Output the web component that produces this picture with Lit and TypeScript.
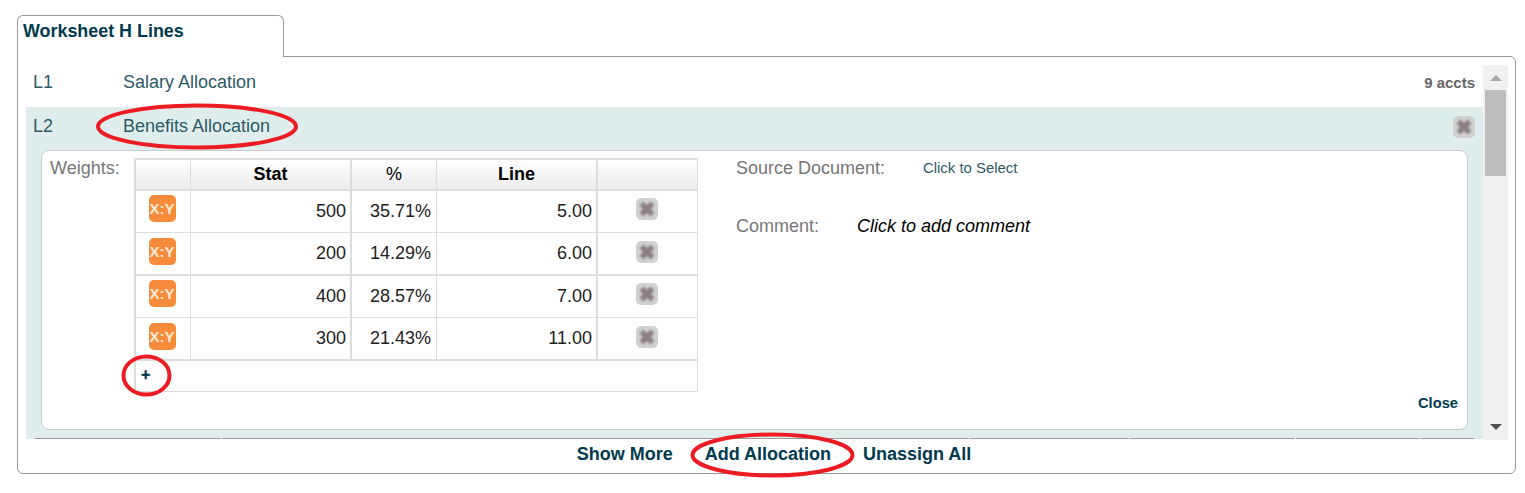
import { LitElement, html, css, svg } from "lit";
import { customElement } from "lit/decorators.js";

const rows = [
  { stat: "500", pct: "35.71%", line: "5.00", h: 42, thick: false },
  { stat: "200", pct: "14.29%", line: "6.00", h: 43, thick: true },
  { stat: "400", pct: "28.57%", line: "7.00", h: 42, thick: false },
  { stat: "300", pct: "21.43%", line: "11.00", h: 43, thick: true },
];

const xIcon = (cls: string) => html`<span class="xbtn ${cls}"><svg viewBox="0 0 22 22" width="22" height="22"><path d="M5.5 5.5 16.5 16.5M16.5 5.5 5.5 16.5" stroke="#8a7e80" stroke-width="5.6" fill="none"/></svg></span>`;

@customElement("app-root")
export class AppRoot extends LitElement {
  static styles = css`
    :host { display: block; height: 493px; position: relative; overflow: hidden; background: #fff;
      font-family: "Liberation Sans", Arial, sans-serif; font-size: 18px; color: #222; }
    * { box-sizing: border-box; }
    .page { padding: 15px 9px 0 17px; }
    .tab { width: 267px; height: 42px; margin-bottom: -1px; position: relative; z-index: 1; background: #fff;
      border: 1px solid #999; border-bottom: none; border-radius: 6px 6px 0 0;
      padding: 5px 0 0 5px; font-weight: 700; font-size: 17.9px; line-height: 20px; color: #003a4f; }
    .panel { height: 418px; border: 1px solid #999; border-radius: 0 6px 6px 6px; padding: 8px 7px 0 8px; }
    .scroll { display: flex; height: 375px; overflow: hidden; }
    .list { flex: 1; min-width: 0; }
    .row { display: flex; align-items: center; height: 42px; padding: 0 8px 8px 7px; color: #2d5a67; }
    .row .num { width: 90px; }
    .row .name { flex: 1; }
    .accts { font-size: 15px; font-weight: 700; color: #666; }
    .open { background: #e0eded; height: 332px; padding-top: 1px; }
    .open .row { height: 42px; padding-bottom: 5px; }
    .card { height: 280px; margin: 0 15px; background: #fff; border: 1px solid #c6cccc; border-radius: 8px;
      display: flex; padding: 7px 9px 0 8px; }
    .weights { width: 84px; line-height: 20px; color: #777; }
    .grid { width: 564px; height: 234px; display: grid; grid-template-columns: 55px 161px 85px 161px 100px;
      border-left: 2px solid #ddd; border-top: 2px solid #ddd; align-self: flex-start; }
    .cell { border-right: 1px solid #ddd; border-bottom: 1px solid #ddd; display: flex; align-items: center;
      justify-content: flex-end; padding-right: 5px; }
    .thick { border-right-width: 2px; padding-right: 4px; }
    .rowline { border-bottom-width: 2px; }
    .head { height: 31px; justify-content: center; padding: 0; font-weight: 700; color: #000; border-bottom-width: 2px;
      background: linear-gradient(#fff, #ececec); }
    .head.pct { font-weight: 400; }
    .center { justify-content: center; padding: 0; }
    .add { grid-column: 1 / -1; height: 31px; justify-content: flex-start; padding: 0 0 3px 5px; font-size: 16px;
      font-weight: 700; color: #003a4f; -webkit-text-stroke: 0.4px #003a4f; }
    .xy { width: 27px; height: 27px; border-radius: 5px; background: #f68b3b; color: #fde9d8; font-size: 15px;
      font-weight: 700; display: flex; align-items: center; justify-content: center; margin: -7px 0 0 -2px; }
    .rowline .xy { margin-top: -5px; }
    .xbtn { display: block; width: 22px; height: 22px; border-radius: 5px; background: #d2d1d1; line-height: 0; }
    .xbtn svg { display: block; filter: blur(.8px); }
    .row-x { margin: -5px 0 0 -2px; }
    .rowline .row-x { margin-top: -3px; }
    .side { flex: 1; display: flex; flex-direction: column; padding-left: 38px; color: #777; line-height: 20px; }
    .field { display: flex; align-items: center; }
    .field .label { width: 187px; }
    .field.comment { margin-top: 38px; }
    .field.comment .label { width: 121px; }
    .select { font-size: 14.9px; color: #2d5a67; }
    .hint { font-style: italic; color: #000; }
    .close { margin-top: auto; align-self: flex-end; font-size: 14.7px; font-weight: 700; color: #003a4f; padding-bottom: 16px; }
    .next { display: grid; grid-template-columns: 186px 747px 159px 165px 123px 54px; gap: 1px; height: 1px; margin-top: -1px;
      margin-left: 9px; width: 1439px; position: relative; background: #fff; }
    .next i { background: #999; display: block; }
    .bar { width: 25px; background: #f1f1f1; display: flex; flex-direction: column; align-items: center; position: relative; }
    .arrow-up { margin-top: 10px; border: 6px solid transparent; border-top: 0; border-bottom: 6px solid #a8a8a8; width: 0; }
    .thumb { width: 21px; height: 86px; margin-top: 9px; background: #bdbdbd; }
    .arrow-down { margin-top: auto; margin-bottom: 10px; border: 6px solid transparent; border-bottom: 0; border-top: 6px solid #505050; width: 0; }
    .footer { display: flex; justify-content: center; gap: 32px; padding: 4px 0 0 14px; font-weight: 700; line-height: 20px; color: #003a4f; }
    .marks { position: absolute; inset: 0; pointer-events: none; z-index: 3; }
    .marks ellipse { fill: none; stroke: #ed1c24; stroke-width: 4; }
  `;

  render() {
    return html`
      <div class="page">
        <div class="tab">Worksheet H Lines</div>
        <div class="panel">
          <div class="scroll">
            <div class="list">
              <div class="row"><span class="num">L1</span><span class="name">Salary Allocation</span><span class="accts">9 accts</span></div>
              <div class="open">
                <div class="row"><span class="num">L2</span><span class="name">Benefits Allocation</span>${xIcon("")}</div>
                <div class="card">
                  <div class="weights">Weights:</div>
                  <div class="grid">
                    <div class="cell head"></div>
                    <div class="cell head thick">Stat</div>
                    <div class="cell head pct">%</div>
                    <div class="cell head thick">Line</div>
                    <div class="cell head"></div>
                    ${rows.map((r) => {
                      const line = r.thick ? "rowline" : "";
                      return html`
                      <div class="cell center ${line}" style="height:${r.h}px"><span class="xy">X:Y</span></div>
                      <div class="cell thick ${line}">${r.stat}</div>
                      <div class="cell ${line}">${r.pct}</div>
                      <div class="cell thick ${line}">${r.line}</div>
                      <div class="cell center ${line}">${xIcon("row-x")}</div>`;
                    })}
                    <div class="cell add">+</div>
                  </div>
                  <div class="side">
                    <div class="field"><span class="label">Source Document:</span><span class="select">Click to Select</span></div>
                    <div class="field comment"><span class="label">Comment:</span><span class="hint">Click to add comment</span></div>
                    <div class="close">Close</div>
                  </div>
                </div>
              </div>
              <div class="next"><i></i><i></i><i></i><i></i><i></i><i></i></div>
            </div>
            <div class="bar"><div class="arrow-up"></div><div class="thumb"></div><div class="arrow-down"></div></div>
          </div>
          <div class="footer"><span>Show More</span><span>Add Allocation</span><span>Unassign All</span></div>
        </div>
      </div>
      <svg class="marks" width="1525" height="493" viewBox="0 0 1525 493">
        ${svg`<ellipse cx="197" cy="126.5" rx="99" ry="21"/>
        <ellipse cx="146.5" cy="375.5" rx="23" ry="19"/>
        <ellipse cx="772.5" cy="455" rx="80" ry="20.5"/>`}
      </svg>`;
  }
}
